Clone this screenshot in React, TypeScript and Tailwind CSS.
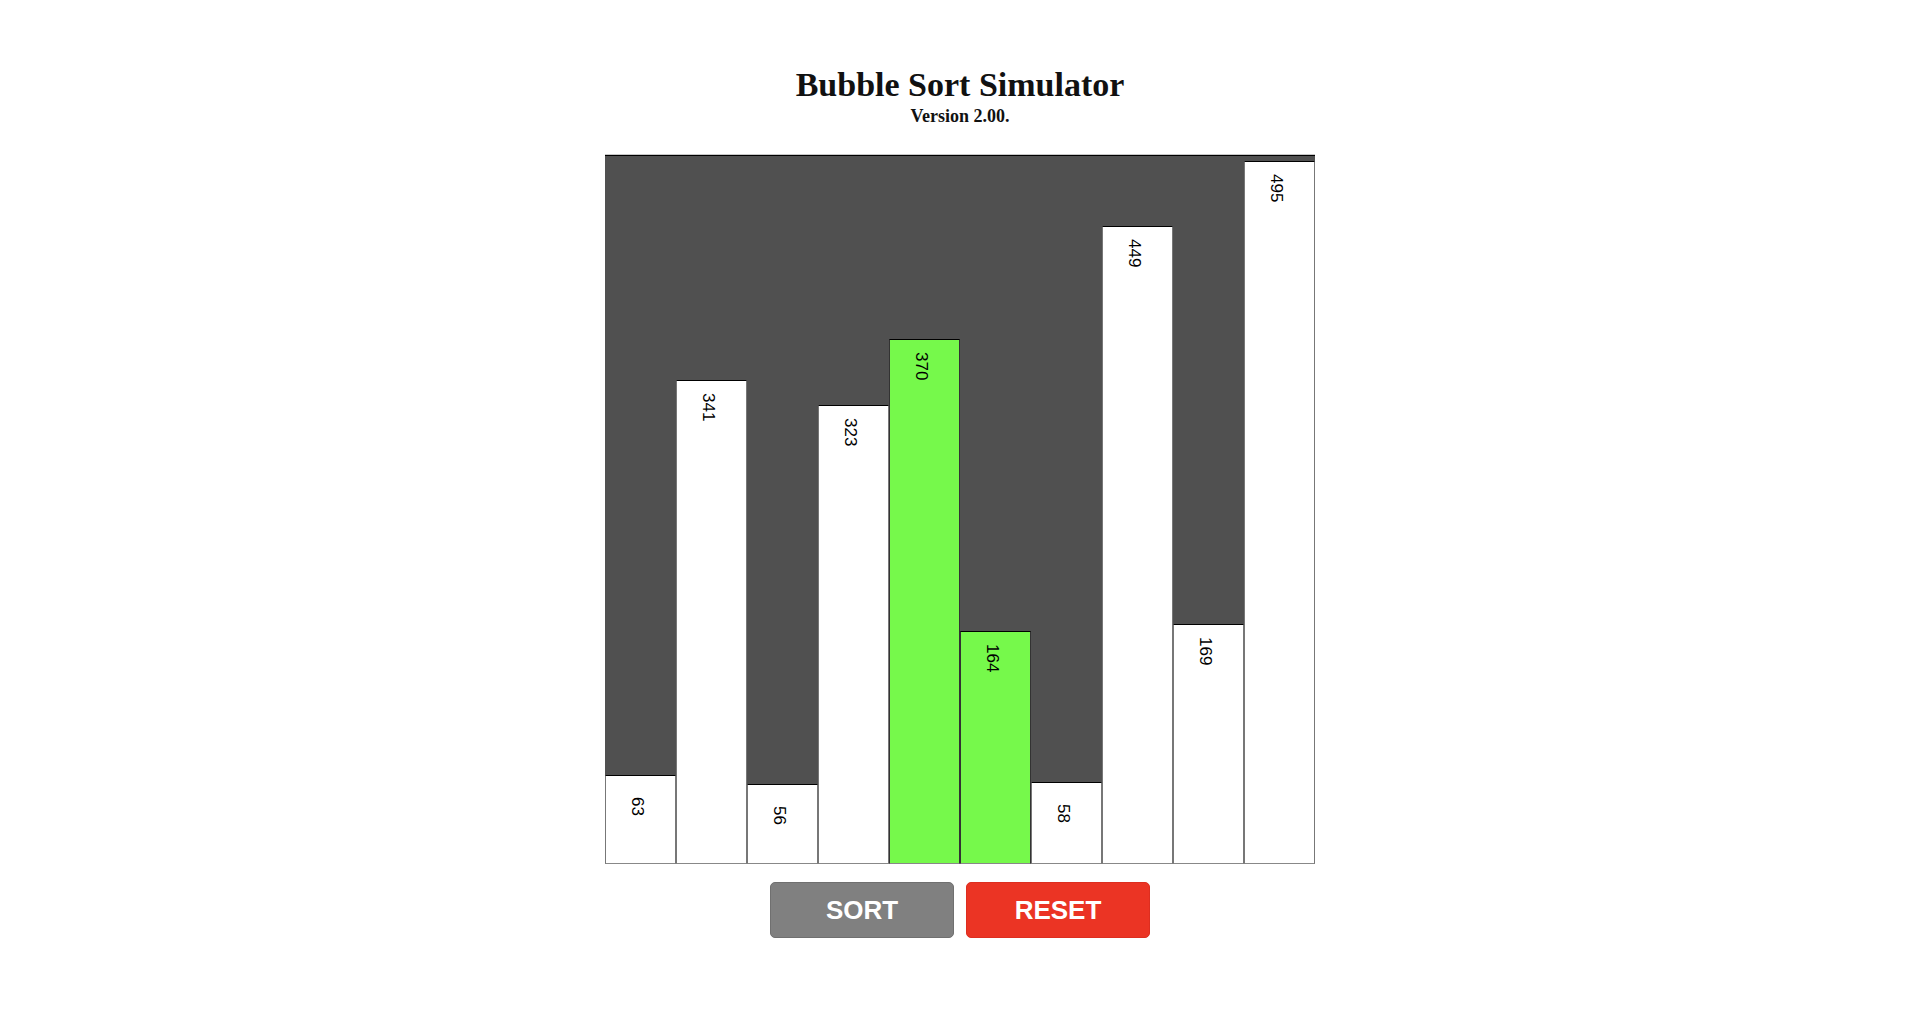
import React from "react";

const bars = [
  { value: 63, active: false },
  { value: 341, active: false },
  { value: 56, active: false },
  { value: 323, active: false },
  { value: 370, active: true },
  { value: 164, active: true },
  { value: 58, active: false },
  { value: 449, active: false },
  { value: 169, active: false },
  { value: 495, active: false },
];

const Bar = ({ value, active }: { value: number; active: boolean }) => {
  return (
    <div
      className={
        "flex flex-col items-center w-[71px] shrink-0 border-t border-t-black border-x border-b border-b-[#888] " +
        (active ? "bg-[#76f94b] border-x-[#333]" : "bg-white border-x-[#777]")
      }
      style={{ height: `${Math.round(value * 1.42)}px` }}
    >
      <div className="h-[40px] flex flex-col justify-end items-center pr-[7px]">
        <span className="[writing-mode:vertical-rl] text-[17px] leading-[17px] text-black font-['Liberation_Sans',Arial,sans-serif]">
          {value}
        </span>
      </div>
    </div>
  );
};

export default function App() {
  return (
    <div className="min-h-screen bg-white flex flex-col items-center pt-[68px]">
      <h1 className="text-[34px] leading-[34px] font-bold text-[#111] font-['Liberation_Serif','Times_New_Roman',serif]">
        Bubble Sort Simulator
      </h1>
      <div className="mt-[5px] text-[18px] leading-[18px] font-bold text-[#111] font-['Liberation_Serif','Times_New_Roman',serif]">
        Version 2.00.
      </div>
      <div className="mt-[29px] w-[710px] border-t border-t-[#c8c8c8]">
        <div className="h-[709px] flex items-end bg-[#505050] border-t border-t-black">
          {bars.map((b, i) => (
            <Bar key={i} value={b.value} active={b.active} />
          ))}
        </div>
      </div>
      <div className="mt-[18px] flex gap-[12px]">
        <button className="w-[184px] h-[56px] rounded-[5px] bg-[#808080] border border-[#707070] text-white text-[26px] font-bold font-['Liberation_Sans',Arial,sans-serif]">
          SORT
        </button>
        <button className="w-[184px] h-[56px] rounded-[5px] bg-[#eb3424] border border-[#dd2e20] text-white text-[26px] font-bold font-['Liberation_Sans',Arial,sans-serif]">
          RESET
        </button>
      </div>
    </div>
  );
}
